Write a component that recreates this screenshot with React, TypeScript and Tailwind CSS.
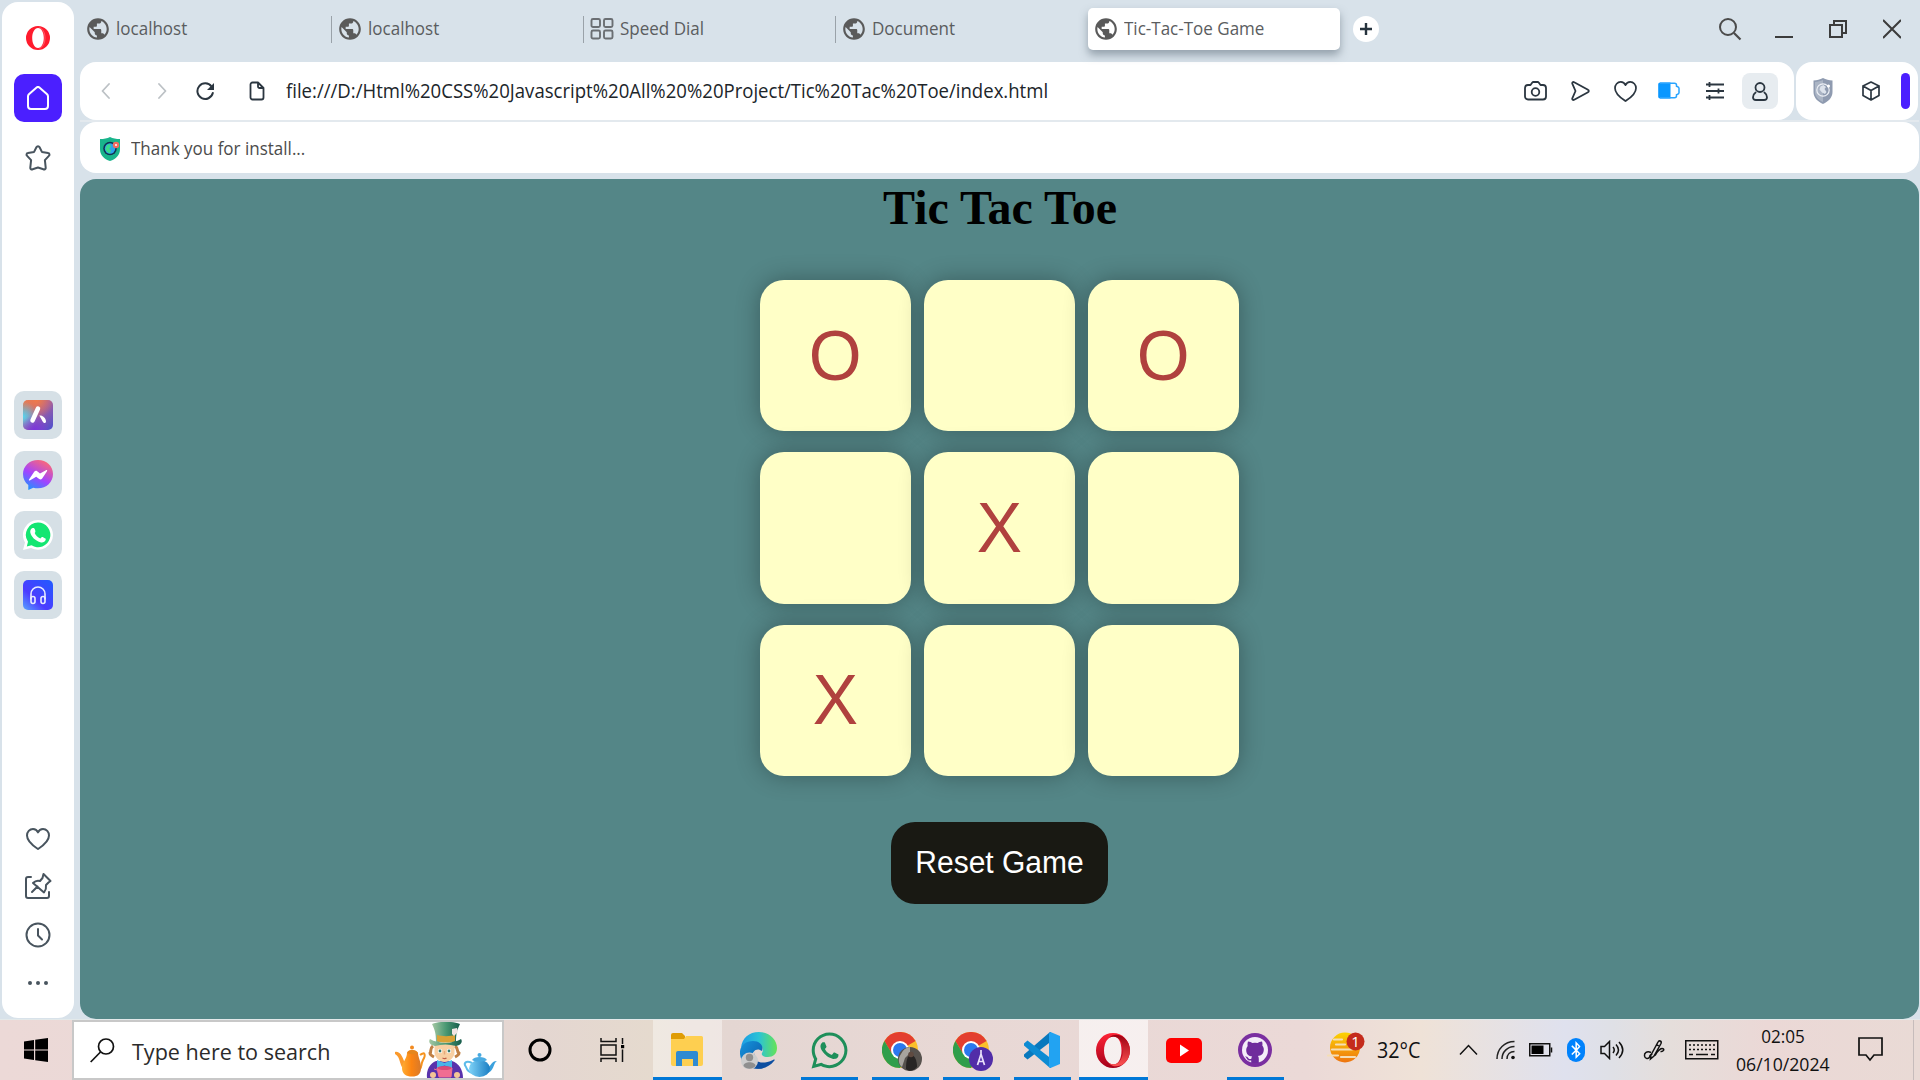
import React from "react";
import { MdPublic } from "react-icons/md";
import { FaWhatsapp, FaBluetoothB } from "react-icons/fa";

const ui = "font-['Open_Sans','Noto_Sans',sans-serif]";

type IconProps = { w: number; h: number; vb?: string; className?: string; children: React.ReactNode };
function Icon({ w, h, vb, className = "", children }: IconProps) {
  return (
    <svg width={w} height={h} viewBox={vb ?? `0 0 ${w} ${h}`} fill="none" className={`block shrink-0 ${className}`}>
      {children}
    </svg>
  );
}

const line = { stroke: "currentColor", strokeWidth: 2, strokeLinecap: "round", strokeLinejoin: "round" } as const;
const HEART = "M12 21C9 19 1 14 1 7.5C1 3.8 3.6 1 7 1c2.200 0 4 1.200 5 3.400C13 2.200 14.800 1 17 1c3.400 0 6 2.800 6 6.500C23 14 15 19 12 21z";

function Slot({ children, className = "" }: { children: React.ReactNode; className?: string }) {
  return <div className={`flex h-12 w-12 shrink-0 items-center justify-center ${className}`}>{children}</div>;
}

function Sidebar() {
  return (
    <aside className="mt-0.5 ml-0.5 flex h-[1016px] w-[72px] shrink-0 flex-col items-center rounded-2xl bg-white pt-3 pb-[11px] text-[#48545e]">
      <div className="flex flex-col gap-3">
        <Slot>
          <Icon w={24} h={24}>
            <path fill="#ff1b2d" fillRule="evenodd" d="M12 0a12 12 0 1 0 0 24a12 12 0 0 0 0-24zM12 2c3.400 0 5.800 4.500 5.800 10s-2.400 10-5.800 10s-5.800-4.500-5.800-10S8.600 2 12 2z" />
            <path d="M13.500 1.500C17 3 19 7 19 12s-2 9-5.500 10.500" stroke="#fff" strokeOpacity=".35" strokeWidth=".8" />
          </Icon>
        </Slot>
        <Slot className="rounded-[10px] bg-[#4b1fff] text-white">
          <Icon w={22} h={24}>
            <path {...line} d="M1 10.500a3 3 0 0 1 .9-2.200L9.600 1.600a2 2 0 0 1 2.800 0l7.700 6.700a3 3 0 0 1 .9 2.200V20a3 3 0 0 1-3 3H4a3 3 0 0 1-3-3z" />
          </Icon>
        </Slot>
        <Slot>
          <Icon w={28} h={28}>
            <path {...line} d="M12.400 3.200a1.800 1.800 0 0 1 3.200 0l2.300 4.700l6.200 1.200a1.500 1.500 0 0 1 .8 2.700l-4 4.400l.8 7.400a1.600 1.600 0 0 1-2.300 1.700L14 23.500l-5.400 1.800a1.600 1.600 0 0 1-2.300-1.700l.8-7.400l-4-4.400a1.500 1.500 0 0 1 .8-2.700l6.200-1.200z" />
          </Icon>
        </Slot>
      </div>
      <div className="mt-[209px] flex flex-col gap-3">
        <Slot className="rounded-[10px] bg-[#d6e0e6]">
          <Icon w={30} h={30}>
            <defs>
              <linearGradient id="aria" x1="0" y1="0" x2="1" y2="1"><stop offset="0" stopColor="#e8814f" /><stop offset=".45" stopColor="#a660a0" /><stop offset="1" stopColor="#4a4fd0" /></linearGradient>
              <radialGradient id="ariaTeal" cx="0" cy=".55" r=".5"><stop offset="0" stopColor="#55d5ee" /><stop offset="1" stopColor="#55d5ee" stopOpacity="0" /></radialGradient>
              <radialGradient id="ariaPurple" cx=".4" cy="1" r=".5"><stop offset="0" stopColor="#7c35dd" /><stop offset="1" stopColor="#7c35dd" stopOpacity="0" /></radialGradient>
              <radialGradient id="ariaOrange" cx=".45" cy="0" r=".6"><stop offset="0" stopColor="#f07a4a" /><stop offset="1" stopColor="#f07a4a" stopOpacity="0" /></radialGradient>
            </defs>
            <rect width="30" height="30" rx="5" fill="url(#aria)" />
            <rect width="30" height="30" rx="5" fill="url(#ariaOrange)" />
            <rect width="30" height="30" rx="5" fill="url(#ariaTeal)" />
            <rect width="30" height="30" rx="5" fill="url(#ariaPurple)" />
            <path d="M15 8.500L9.500 20.500" stroke="#fff" strokeWidth="4.500" strokeLinecap="round" />
            <path d="M16.300 15.500c3-.5 6.500 2 6.700 5.800c0 2-1.400 2.200-2.600 1.200c-1.300-1.600-2.200-4-4.100-7z" fill="#fff" />
          </Icon>
        </Slot>
        <Slot className="rounded-[10px] bg-[#d6e0e6]">
          <Icon w={30} h={30}>
            <defs><linearGradient id="msgr" x1=".2" y1="1" x2=".75" y2="0"><stop offset="0" stopColor="#1a96ff" /><stop offset=".45" stopColor="#a243ff" /><stop offset="1" stopColor="#ff6a72" /></linearGradient></defs>
            <path fill="url(#msgr)" d="M15 0C6.500 0 0 6.200 0 14c0 4.800 2 8.500 5.300 11V30l5-2.300c1.500.4 3 .6 4.700.6C23.500 28.300 30 22 30 14S23.500 0 15 0z" />
            <path fill="#fff" d="M6 19.500l5.200-7.800c.8-1 2-1.200 3-.5l2.800 2.200l6-3.200c1-.5 1.500.2 1 1l-4.800 7.300c-.8 1-2 1.200-3 .5l-3-2.200l-6 3.500c-1 .5-1.700 0-1.200-.8z" />
          </Icon>
        </Slot>
        <Slot className="rounded-[10px] bg-[#d6e0e6]">
          <Icon w={30} h={30}>
            <path fill="#fff" d="M15 0A15 15 0 0 1 30 15A15 15 0 0 1 8 28L0 30l2-7.500A15 15 0 0 1 15 0z" />
            <path fill="#14e672" d="M15 2.600A12.300 12.300 0 1 1 8.500 25.300L3.800 26.500l1.200-4.700A12.300 12.300 0 0 1 15 2.600z" />
            <path fill="#fff" d="M9 8.300c1.500-.8 2.500-.3 3 1.500c.5 1.500.7 2-.3 3.200c1 2.600 3 4.300 5.600 5.600c1.200-1.500 1.700-2 3.200-1.200c2 1 2.500 1.200 2.200 2.300c-.8 2.300-3 3.300-5.500 2.500C12 20.500 8.500 17 7.300 12.500C7 10.700 7.700 9.200 9 8.300z" />
          </Icon>
        </Slot>
        <Slot className="rounded-[10px] bg-[#d6e0e6]">
          <Icon w={30} h={30}>
            <defs><linearGradient id="music" x1="0" y1="1" x2=".9" y2="0"><stop offset="0" stopColor="#5aa5ff" /><stop offset=".4" stopColor="#4c3cff" /><stop offset="1" stopColor="#2459ff" /></linearGradient></defs>
            <rect width="30" height="30" rx="5" fill="url(#music)" />
            <path d="M8 19.500V14a7 7 0 0 1 14 0v5.500" stroke="#e8ecff" strokeWidth="1.600" />
            <rect x="8" y="16.500" width="4" height="7" rx="2" stroke="#e8ecff" strokeWidth="1.600" />
            <rect x="18" y="16.500" width="4" height="7" rx="2" stroke="#e8ecff" strokeWidth="1.600" />
          </Icon>
        </Slot>
      </div>
      <div className="mt-auto flex flex-col">
        <Slot><Icon w={24} h={22}><path {...line} d={HEART} /></Icon></Slot>
        <Slot>
          <Icon w={28} h={28} className="-translate-y-px">
            <path {...line} d="M7 5H4a2 2 0 0 0-2 2v17a2 2 0 0 0 2 2h19a2 2 0 0 0 2-2v-4" />
            <path {...line} d="M19.500 2l7 7l-2 1.500l-2.500 2.500c.5 3-.2 5-2 7.500L9 11c2-2 4.500-2.800 7-2l2.500-3zM13.500 14.500L8 20" />
          </Icon>
        </Slot>
        <Slot><Icon w={26} h={26}><circle cx="13" cy="13" r="11.500" {...line} /><path {...line} d="M13 7v6.500l4 4" /></Icon></Slot>
        <Slot><Icon w={20} h={4}><circle cx="2" cy="2" r="2" fill="currentColor" /><circle cx="10" cy="2" r="2" fill="currentColor" /><circle cx="18" cy="2" r="2" fill="currentColor" /></Icon></Slot>
      </div>
    </aside>
  );
}

const tabs = [
  { title: "localhost", active: false },
  { title: "localhost", active: false },
  { title: "Speed Dial", active: false, dial: true },
  { title: "Document", active: false },
  { title: "Tic-Tac-Toe Game", active: true },
];

function TabBar() {
  return (
    <div className="flex h-[62px] items-start">
      {tabs.map((t, i) => (
        <div
          key={i}
          className={`relative mt-2 flex h-[42px] w-[252px] items-center pb-px pl-[5px] ${t.active ? "z-10 rounded-[5px] bg-white shadow-[0_5px_9px_rgba(80,95,110,0.5)]" : ""}`}
        >
          {t.dial ? (
            <Icon w={24} h={24} className="mr-[6px] ml-px">
              {[[1.5, 2], [14, 2], [1.5, 13.5], [14, 13.5]].map(([x, y]) => (
                <rect key={`${x}-${y}`} x={x} y={y} width="8.500" height="8" rx="1.500" stroke="#6b6f73" strokeWidth="1.900" />
              ))}
            </Icon>
          ) : (
            <MdPublic size={26} color="#5a5a5a" className="mr-[5px] shrink-0" />
          )}
          <span className="origin-left scale-x-[0.945] text-[18px] whitespace-nowrap text-[#5b5d5f]">{t.title}</span>
          {i < 3 && <span className="absolute top-2 right-0 h-[27px] w-px bg-[#9aa2a9]" />}
        </div>
      ))}
      <div className="mt-4 ml-[13px] flex h-[26px] w-[26px] items-center justify-center rounded-full bg-white">
        <Icon w={12} h={12}><path d="M6 0v12M0 6h12" stroke="#26333d" strokeWidth="2.400" /></Icon>
      </div>
      <div className="mt-[18px] mr-[18px] ml-auto flex items-start text-[#3c3c3c]">
        <Icon w={23} h={23} className="mr-[33px]"><circle cx="9" cy="9" r="8" stroke="#4b4b4b" strokeWidth="2" /><path d="M15 15L21.500 21.500" stroke="#4b4b4b" strokeWidth="2.200" /></Icon>
        <Icon w={18} h={22} className="mr-[36px]"><path d="M0 19h18" stroke="currentColor" strokeWidth="2" /></Icon>
        <Icon w={18} h={22} className="mr-[36px]"><path d="M1 8h12v12H1zM5 8V4h12v12h-4" stroke="currentColor" strokeWidth="2" transform="translate(0 -1)" /></Icon>
        <Icon w={18} h={22}><path d="M0 2l18 18M18 2L0 20" stroke="currentColor" strokeWidth="2" /></Icon>
      </div>
    </div>
  );
}

function Cell({ w, children, className = "" }: { w: string; children: React.ReactNode; className?: string }) {
  return <div className={`flex shrink-0 items-center justify-center ${w} ${className}`}>{children}</div>;
}

function Toolbar() {
  const s = { stroke: "currentColor", strokeWidth: 1.8, strokeLinecap: "round", strokeLinejoin: "round" } as const;
  return (
    <div className="flex h-[60px] gap-0.5 border-b-2 border-[#e3e9ee]">
      <div className="flex w-[1714px] items-center rounded-2xl bg-white text-[#2b3640]">
        <div className="flex items-center pl-[21px]">
          <Icon w={10} h={16}><path {...s} stroke="#bcc1c5" d="M8 1L1.500 8L8 15" /></Icon>
          <Icon w={10} h={16} className="ml-[46px]"><path {...s} stroke="#bcc1c5" d="M2 1l6.500 7L2 15" /></Icon>
          <Icon w={19} h={18} className="ml-[29px]"><path {...s} strokeWidth={2} d="M15.500 4.500A7.800 7.800 0 1 0 16.800 11" /><path d="M18 1v7h-7z" fill="currentColor" /></Icon>
          <Icon w={16} h={20} className="ml-[34px]"><path {...s} d="M3.500 1.500H9L14.500 7v9.500a2 2 0 0 1-2 2h-9a2 2 0 0 1-2-2v-13a2 2 0 0 1 2-2zM9 1.500v4a1.500 1.500 0 0 0 1.500 1.500h4" /></Icon>
        </div>
        <span className="ml-[21px] origin-left scale-x-[0.928] text-[20px] whitespace-nowrap text-[#20252a]">
          file:///D:/Html%20CSS%20Javascript%20All%20%20Project/Tic%20Tac%20Toe/index.html
        </span>
        <div className="mr-4 ml-auto flex h-9 items-center">
          <Cell w="w-[46px]"><Icon w={23} h={20}><path {...s} d="M4 4h2.500l1.800-2.500a1.500 1.500 0 0 1 1-.5h4.400a1.500 1.500 0 0 1 1 .5L16.500 4H19a3 3 0 0 1 3 3v8.500a3 3 0 0 1-3 3H4a3 3 0 0 1-3-3V7a3 3 0 0 1 3-3z" /><circle cx="11.500" cy="11" r="3.800" {...s} /></Icon></Cell>
          <Cell w="w-[46px]"><Icon w={19} h={20} className="-translate-x-px"><path {...s} d="M3.200 1.200L17 8.800a1.300 1.300 0 0 1 0 2.400L3.200 18.800c-1.200.6-2.200-.3-1.900-1.500L4.500 10L1.300 2.700C1 1.500 2 .6 3.200 1.200z" /></Icon></Cell>
          <Cell w="w-[44px]"><Icon w={23} h={21} vb="0 0 24 22" className="-translate-x-px"><path {...s} d={HEART} /></Icon></Cell>
          <Cell w="w-[44px]"><Icon w={22} h={17} className="-translate-x-px -translate-y-px"><path d="M2 .5h10.500v16H2a1.800 1.800 0 0 1-1.800-1.800V2.300A1.800 1.800 0 0 1 2 .5z" fill="#0a97ff" /><path d="M2 1.200h14.500c1.500 0 2 .5 2 2v1c1 .4 2.500.5 2.500 2v4.600c0 1.500-1.500 1.600-2.500 2v1c0 1.500-.5 2-2 2H2" stroke="#29a4ff" strokeWidth="1.500" /></Icon></Cell>
          <Cell w="w-[46px]"><Icon w={18} h={18}><path {...s} strokeLinecap="butt" d="M0 2.500h18M0 9h18M0 15.500h18M3.500 0v5M12.500 6.500v5M3.500 13v5" /></Icon></Cell>
          <Cell w="w-9" className="ml-1 h-9 rounded-lg bg-[#e7ecf0]"><Icon w={16} h={19}><circle cx="8" cy="5.500" r="4.500" {...s} /><path {...s} d="M3.600 10.500C1.800 11.800 1 13.500 1 15.200C1 17.200 2.500 18 4 18h8c1.500 0 3-.8 3-2.800c0-1.700-.8-3.400-2.600-4.700" /></Icon></Cell>
        </div>
      </div>
      <div className="flex w-[122px] items-center rounded-2xl bg-white pl-[17px] text-[#2b3640]">
        <Icon w={20} h={26}>
          <path d="M10 0c3 1.700 6 2.300 9.500 2.500V14c0 5.500-4 9.500-9.500 12C4.500 23.500.5 19.500.5 14V2.500C4 2.300 7 1.700 10 0z" fill="#8f9bb0" />
          <path d="M10 2v22c-4.500-2-8-5.500-8-10V4c3-.2 5.500-.8 8-2z" fill="#aab4c4" />
          <circle cx="10" cy="12" r="6.200" stroke="#edf0f6" strokeWidth="1.200" />
          <path d="M7.500 8.500l3-1.500l2.500 2l-1.500 2l2 3l-1.500 2l-3-1.500l-2.500-3z" fill="#dde3ec" />
          <circle cx="15.500" cy="8" r="1.500" fill="#fff" />
        </Icon>
        <Icon w={18} h={20} className="ml-[29px]"><path {...s} strokeWidth={1.7} d="M9 1l8 4v9.500L9 19l-8-4.500V5zM1 5l8 4.500L17 5M9 9.500V19" /></Icon>
        <span className="ml-[21px] h-9 w-[9px] rounded-[5px] bg-[#4b1fff]" />
      </div>
    </div>
  );
}

function Bookmarks() {
  return (
    <div className="flex h-[51px] items-center rounded-2xl bg-white pt-[2px] pl-5">
      <Icon w={20} h={24}>
        <path d="M10 0c3 1.500 6 2 10 2v10c0 6-4 10-10 12C4 22 0 18 0 12V2c4 0 7-.5 10-2z" fill="#19b48b" />
        <circle cx="10" cy="11.500" r="6.800" fill="#113252" />
        <circle cx="10" cy="11.500" r="5.200" fill="#2aa5ea" />
        <path d="M7 8l3-1l1 3l-2 1.500l2 2l-1 3c-3-1-4.500-3-4.500-5z" fill="#39dc89" />
        <circle cx="16" cy="8" r="3.200" fill="#f36a61" /><circle cx="16" cy="8" r="1" fill="#fff" />
      </Icon>
      <span className="ml-[11px] origin-left scale-x-[0.945] text-[18px] whitespace-nowrap text-[#4c4c4c]">Thank you for install...</span>
    </div>
  );
}

const board = ["O", "", "O", "", "X", "", "X", "", ""];

function Game() {
  return (
    <main className="mt-[6px] flex h-[840px] flex-col items-center rounded-2xl bg-[#548687]">
      <h1 className="mt-px ml-px font-['Liberation_Serif',serif] text-[48px] leading-[55px] font-bold text-black">Tic Tac Toe</h1>
      <div className="mt-[45.300px] grid grid-cols-3 gap-x-[12.600px] gap-y-[21px]">
        {board.map((v, i) => (
          <button
            key={i}
            className="h-[151.200px] w-[151.200px] rounded-3xl bg-[#ffffc7] font-['Liberation_Sans',sans-serif] text-[70px] leading-none text-[#b0413e] shadow-[0_0_24px_rgba(0,0,0,0.3)]"
          >
            <span className="inline-block scale-x-[0.97]">{v}</span>
          </button>
        ))}
      </div>
      <button className="mt-[46px] h-[82px] w-[217px] rounded-3xl bg-[#191913] font-['Liberation_Sans',sans-serif] text-[31px] text-white">
        <span className="inline-block translate-x-[0.500px] scale-x-[0.968] whitespace-nowrap">Reset Game</span>
      </button>
    </main>
  );
}

function TeaParty() {
  return (
    <Icon w={104} h={56}>
      <defs>
        <linearGradient id="hat" x1="0" x2="1"><stop offset="0" stopColor="#a4c7a3" /><stop offset=".5" stopColor="#4a9873" /><stop offset="1" stopColor="#175d4c" /></linearGradient>
        <linearGradient id="pot" x1="0" x2="1"><stop offset="0" stopColor="#ffad32" /><stop offset=".5" stopColor="#fb8412" /><stop offset="1" stopColor="#d9792a" /></linearGradient>
        <linearGradient id="blue" x1="0" x2="1"><stop offset="0" stopColor="#7ed2f7" /><stop offset="1" stopColor="#1c7fc4" /></linearGradient>
      </defs>
      <path d="M25 33c5-4 6 0 3 5c-2 4-1 6-3 9" stroke="#f5931f" strokeWidth="2" />
      <path d="M0 30c4-1 7 3 9 9l1 9C4 45 6 35 0 32z" fill="#fb9a2c" />
      <path d="M12 31c1-4 9-4 11 0c0 4 3 8 3 15c0 6-3 8.500-9 8.500S7 52 7 46c0-6 5-9 5-15z" fill="url(#pot)" />
      <path d="M12 31c1-4 9-4 11 0c-3 1.500-8 1.500-11 0z" fill="#e5861d" /><circle cx="17" cy="25.500" r="2" fill="#f28a20" />
      <path d="M32 56c-1-8 3-15 9-17h16c7 2 11 9 11 17z" fill="#5932ac" />
      <path d="M38 24c-4 3-1 5-3 7c0 2 2 3 4 4M60 24c4 3 1 5 4 7c0 2-2 3-4 4" stroke="#c08045" strokeWidth="3" />
      <path d="M39.500 22h20v9c0 4-5 9-10 9s-10-5-10-9z" fill="#f8cfa2" />
      <circle cx="45" cy="29" r="2.200" fill="#fff" /><circle cx="54" cy="29" r="2.200" fill="#fff" />
      <circle cx="45" cy="29" r="1.400" fill="#35776c" /><circle cx="54" cy="29" r="1.400" fill="#35776c" />
      <path d="M49.500 29v3.500" stroke="#e5a87b" strokeWidth="1.500" />
      <path d="M47.500 36q2.500 1.200 4 0" stroke="#bd5b44" strokeWidth="1.100" />
      <path d="M37 2c8-3 20-3 28 0c-3 6-4 10-4 18H41c0-8-1-12-4-18z" fill="url(#hat)" />
      <path d="M35 17c8 5 23 5 31 0c2 3 0 6-5 7c-7-2-14-2-21 0c-5-1-7-4-5-7z" fill="url(#hat)" />
      <path d="M42 13c5 1.500 13 1.500 18 0v6c-5 2-13 2-18 0z" fill="#d9a237" />
      <path d="M57 7l5-1l1 4l-4 4l-2-2z" fill="#f1e5e4" />
      <path d="M42 38l7.500 3l7.500-3v8l-7.500-2.500L42 46z" fill="#49b5e8" />
      <path d="M42 46h15l-1 9H44zM42 48l-3-1" fill="#f06d92" stroke="#f06d92" />
      <ellipse cx="49.500" cy="46" rx="7" ry="2" fill="#d94b77" />
      <circle cx="38" cy="53" r="3" fill="#f4c595" /><circle cx="62" cy="53" r="3" fill="#f4c595" />
      <path d="M77 41c-6-3-9 0-6 4c1 3 3 5 6 6" stroke="#5dbcea" strokeWidth="2" />
      <path d="M92 45c5 0 3-6 10-6c-4 2-3 11-10 12z" fill="#3ba1dd" />
      <ellipse cx="84.500" cy="46.500" rx="10.500" ry="8.500" fill="url(#blue)" />
      <path d="M77 38c2-4 13-4 15 0c-3 2-12 2-15 0z" fill="#4aabe2" /><circle cx="84.500" cy="33" r="2" fill="#47a9e0" />
    </Icon>
  );
}

function Folder() {
  return (
    <Icon w={32} h={34}>
      <path d="M0 6V2a2 2 0 0 1 2-2h9l3 3v4H0z" fill="#df9c05" />
      <path d="M0 6h13l2-3h15.500A1.500 1.500 0 0 1 32 4.500V31a2 2 0 0 1-2 2H2a2 2 0 0 1-2-2z" fill="#fecf50" />
      <path d="M5 33V20a2 2 0 0 1 2-2h18a2 2 0 0 1 2 2v13h-5v-7H11v7z" fill="#2f8ad2" />
    </Icon>
  );
}

function Edge() {
  return (
    <Icon w={37} h={37}>
      <defs>
        <linearGradient id="edgeTop" x1="0" x2="1"><stop offset="0" stopColor="#1b9be5" /><stop offset=".5" stopColor="#2bc3d5" /><stop offset="1" stopColor="#66e356" /></linearGradient>
        <linearGradient id="edgeLeft" x1="0" y1="0" x2="1" y2="1"><stop offset="0" stopColor="#1595dc" /><stop offset="1" stopColor="#0b55a6" /></linearGradient>
      </defs>
      <path d="M1 16C2 6 9 0 19 0c11 0 18 8 18 16c0 6-4 9-9 9c-5 0-7-2-6-4c3-5-2-10-9-10C7 11 3 13 1 16z" fill="url(#edgeTop)" />
      <path d="M0 19C1 13 6 9 13 9c7 0 11 5 9 10c-5-4-10 0-10 6c0 8 6 11 11 11C10 39-1 31 0 19z" fill="url(#edgeLeft)" />
      <path d="M15 20c-3 9 5 14 18 8c2-1 2 0 1 1c-6 8-18 10-24 5z" fill="#0d4ea0" />
      <circle cx="9.500" cy="29" r="8.500" fill="#cdcdcd" /><circle cx="9.500" cy="25.500" r="3.700" fill="#8f8f8f" /><path d="M3.500 34c0-5 12-5 12 0c-3 3.500-9 3.500-12 0z" fill="#8f8f8f" />
    </Icon>
  );
}

function Chrome({ photo }: { photo?: boolean }) {
  return (
    <Icon w={40} h={40}>
      <circle cx="18" cy="18" r="18" fill="#fbc02b" />
      <path d="M18 18L33.600 9A18 18 0 0 0 2.400 9L10 22z" fill="#e33e2f" />
      <path d="M2.400 9A18 18 0 0 0 18 36l8-14H10.200z" fill="#2f9e4b" />
      <circle cx="18" cy="18" r="9" fill="#fff" /><circle cx="18" cy="18" r="7" fill="#2b78ee" />
      {photo ? (
        <>
          <circle cx="28" cy="27" r="12" fill="#57524e" />
          <path d="M19 22a12 12 0 0 1 9-7v6l-5 5l-3 9c-4-3-4-9-1-13z" fill="#a7a49e" />
          <path d="M24 37c0-7 1-14 5-14s6 6 6 12c-3 4-8 5-11 2z" fill="#282524" /><circle cx="29" cy="22.500" r="2.800" fill="#5f4a40" />
        </>
      ) : (
        <>
          <circle cx="28" cy="27" r="12" fill="#512da8" />
          <path d="M24.500 33l3.500-11l3.500 11M25.500 29.500h5M28 18v4" stroke="#e9e0fa" strokeWidth="1.700" />
        </>
      )}
    </Icon>
  );
}

function VsCode() {
  return (
    <Icon w={36} h={36}>
      <path d="M27 0v9.500L3.500 27.500L0 24.500v-2L26 0z" fill="#0878bd" />
      <path d="M27 36v-9.500L3.500 8.500L0 11.500v2L26 36z" fill="#0c8bd3" />
      <path d="M26.500 0L36 4v28l-9.500 4L25 34.500V1.500z" fill="#22a3f2" />
    </Icon>
  );
}

function Opera() {
  return (
    <Icon w={34} h={35}>
      <defs><linearGradient id="opL" x1="0" y1="0" x2="0" y2="1"><stop offset="0" stopColor="#ff2436" /><stop offset="1" stopColor="#a5001a" /></linearGradient><linearGradient id="opR" x1="0" y1="0" x2="0" y2="1"><stop offset="0" stopColor="#9c0010" /><stop offset="1" stopColor="#ff5454" /></linearGradient></defs>
      <path fill="url(#opL)" fillRule="evenodd" d="M17 0a17 17.500 0 1 0 0 35a17 17.500 0 0 0 0-35zM17.500 3.500c5 0 8 6 8 14s-3 14-8 14S8 26 8 17.500S12.500 3.500 17.500 3.500z" />
      <path fill="url(#opR)" d="M13 4.800C16 1 23 .5 28 4.500c8 7 8 19 0 26c-5 4-12 3.500-15-.3c8 4 14-3 14-12.700S21 1 13 4.800z" />
    </Icon>
  );
}

const apps: { icon: React.ReactNode; mode: "none" | "run" | "open" | "front" }[] = [
  { icon: <Folder />, mode: "open" },
  { icon: <Edge />, mode: "none" },
  { icon: <FaWhatsapp size={41} color="#1e8f5a" />, mode: "run" },
  { icon: <div className="translate-x-[2px] translate-y-[2px]"><Chrome photo /></div>, mode: "run" },
  { icon: <div className="translate-x-[2px] translate-y-[2px]"><Chrome /></div>, mode: "run" },
  { icon: <VsCode />, mode: "run" },
  { icon: <Opera />, mode: "front" },
  { icon: <Icon w={36} h={25}><rect width="36" height="25" rx="5" fill="#f00" /><path d="M14 6.500l9 6l-9 6z" fill="#fff" /></Icon>, mode: "none" },
  {
    icon: (
      <Icon w={34} h={34}>
        <circle cx="17" cy="17" r="17" fill="#7a2fa0" />
        <circle cx="17" cy="17" r="13" fill="#f4edf8" />
        <path fill="#6f2c9c" d="M10 8.500c2 0 3.300.8 4.300 1.600a11 11 0 0 1 5.400 0c1-.8 2.300-1.600 4.300-1.600c.7 1.800.5 3 .3 4c1 1.200 1.500 2.500 1.500 4c0 4.500-2.600 6-6 6.500c.8.8 1 1.700 1 3V30h-7.600v-2.500c-3 .5-4-1-4.600-2.300c-.4-.8-.8-1.200-1.600-1.700c2-.5 2.800.8 3.400 1.700c.6.900 1.500 1.100 2.800.7c.1-1.200.5-2 1-2.400c-3.400-.5-6-2-6-6.500c0-1.500.5-2.800 1.500-4c-.2-1-.4-2.200.3-4.500z" />
      </Icon>
    ),
    mode: "run",
  },
];

function Taskbar() {
  const t = { stroke: "#111", strokeWidth: 1.5 } as const;
  return (
    <footer className="flex h-[61px] items-stretch border-t border-[#e3e9ea] bg-linear-[90deg,#ecd9d7_0%,#e9d9d5_22%,#e4d6d1_28%,#e5dace_34%,#e4d6d2_38%,#e8d8d5_50%,#ebd9d7_68%,#efe2d7_74%,#dfe1ee_81.500%,#dfe0e6_84%,#e5dedb_87%,#ebd8d6_92%,#e9dad5_100%]">
      <div className="flex w-[72px] items-center justify-center">
        <Icon w={24} h={24}><path d="M0 3.500L10 2v9.500H0zM11.200 1.800L24 0v11.500H11.200zM0 12.500h10V22L0 20.500zM11.200 12.500H24V24l-12.800-1.800z" fill="#000" /></Icon>
      </div>
      <div className="flex w-[432px] items-center border-2 border-[#c8c8c8] bg-white pl-[16px]">
        <Icon w={25} h={25}><circle cx="16" cy="8.500" r="7.500" stroke="#111" strokeWidth="1.700" /><path d="M10.500 14L.7 24" stroke="#111" strokeWidth="1.700" /></Icon>
        <span className="ml-[17px] origin-left translate-y-px scale-x-[0.98] text-[22px] whitespace-nowrap text-[#2b2b2b]">Type here to search</span>
        <div className="mr-[3px] ml-auto"><TeaParty /></div>
      </div>
      <div className="flex w-[72px] items-center justify-center"><Icon w={24} h={24}><circle cx="12" cy="12" r="10" stroke="#000" strokeWidth="3" /></Icon></div>
      <div className="flex w-[76px] items-center justify-center pr-[3px]">
        <Icon w={25} h={24}><path {...t} d="M1 0v3.500h15V0M1 7h15v10H1zM1 24v-3.500h15V24M22.500 0v6M22.500 11.500V24" /><rect x="21" y="7" width="3.200" height="3.200" fill="#000" /></Icon>
      </div>
      <div className="flex">
        {apps.map((a, i) => (
          <div key={i} className="flex w-[71px] justify-center">
            <div
              className={`flex flex-col items-center ${a.mode === "open" ? "w-[69px] bg-white/40" : a.mode === "front" ? "w-[69px] bg-white/60" : "w-[57px]"}`}
            >
              <div className="flex flex-1 items-center justify-center pt-[3px] pr-px">{a.icon}</div>
              <div className={`h-[3px] w-full ${a.mode === "none" ? "" : "bg-[#0078d7]"}`} />
            </div>
          </div>
        ))}
      </div>
      <div className="flex flex-1 items-center pl-[37px] text-[#111]">
        <Icon w={38} h={34} className="-translate-x-px -translate-y-[3px]">
          <defs><linearGradient id="sun" x1="0" y1="0" x2="0" y2="1"><stop offset="0" stopColor="#fcd303" /><stop offset="1" stopColor="#ee7410" /></linearGradient></defs>
          <circle cx="18" cy="17.500" r="15" fill="url(#sun)" />
          <path d="M7 9.500h8M9 14.500h9M5 19.500h20M1 25.500h10M14 27h14" stroke="#f5deb5" strokeWidth="2.200" strokeLinecap="round" />
          <circle cx="28.500" cy="11.500" r="9" fill="#c42b1c" />
          <text x="28.500" y="17" fill="#fff" fontSize="15" textAnchor="middle" fontFamily="Open Sans">1</text>
        </Icon>
        <span className="ml-[11px] w-[44px] origin-left translate-y-px scale-x-[0.94] text-[21px] whitespace-nowrap">32°C</span>
        <Icon w={19} h={12} className="ml-[38px]"><path {...t} d="M1 10.500L9.500 1.500L18 10.500" /></Icon>
        <Icon w={20} h={20} className="ml-[18px]"><path stroke="#222" strokeWidth="1.500" d="M1 19C1 9 8.500 1.500 18.500 1.500M6 19C6 12 11.500 6.500 18.500 6.500M11 19c0-4.500 3-7.500 7.500-7.500" /><circle cx="17" cy="17.500" r="1.800" fill="#111" /></Icon>
        <Icon w={24} h={14} className="ml-[13px]"><rect x=".75" y=".75" width="20" height="12" {...t} /><rect x="2.500" y="2.500" width="12" height="8.500" fill="#000" /><path d="M22.500 4.500v5" {...t} /></Icon>
        <div className="ml-[14px] flex h-6 w-[18px] items-center justify-center rounded-[9px] bg-[#0082fc] text-white"><FaBluetoothB size={18} /></div>
        <Icon w={25} h={20} className="ml-[15px]"><path {...t} d="M1 6.500h3.500L9.500 1.500v17l-5-5H1z" /><path {...t} d="M13 7q2.500 3 0 6M16 4.500q5 5.500 0 11M19 2q7.500 8 0 16" /></Icon>
        <Icon w={23} h={22} className="ml-[18px]"><path {...t} d="M8 16L15 3c1-2 4-1 3 1.500L11 17l-3.500 3zM13.500 5.500l3 2M8 13.500C4 11.500 1 14 1.500 17c.5 3 4 3.500 5 1c.5-2 1-3 3-3M12 16.500c3-5 6-8 8.500-6.500c1 1-1 3-3 2.500" /></Icon>
        <Icon w={34} h={20} className="ml-[19px]"><rect x=".75" y=".75" width="32" height="18" {...t} /><path stroke="#111" strokeWidth="1.500" strokeDasharray="2 2" d="M4 5h26M4 9.500h26" /><path {...t} d="M4 14.500h4M11 14.500h12M26 14.500h4" /></Icon>
        <div className="ml-[10px] flex w-[108px] flex-col items-center text-[18px] leading-[28px] whitespace-nowrap">
          <span className="scale-x-[0.95]">02:05</span>
          <span className="scale-x-[0.98]">06/10/2024</span>
        </div>
        <Icon w={25} h={26} className="ml-[21px]"><path {...t} strokeWidth={1.7} d="M1 1h23v17h-8l-4 5l-4-5H1z" /></Icon>
        <span className="mr-1.5 ml-auto h-full w-px bg-[#c6bcbb]" />
      </div>
    </footer>
  );
}

export default function App() {
  return (
    <div className={`flex h-[1080px] w-[1920px] flex-col overflow-hidden bg-[#d8e2ea] ${ui}`}>
      <div className="flex h-[1019px]">
        <Sidebar />
        <div className="ml-[6px] flex w-[1839px] flex-col">
          <TabBar />
          <Toolbar />
          <Bookmarks />
          <Game />
        </div>
      </div>
      <Taskbar />
    </div>
  );
}
